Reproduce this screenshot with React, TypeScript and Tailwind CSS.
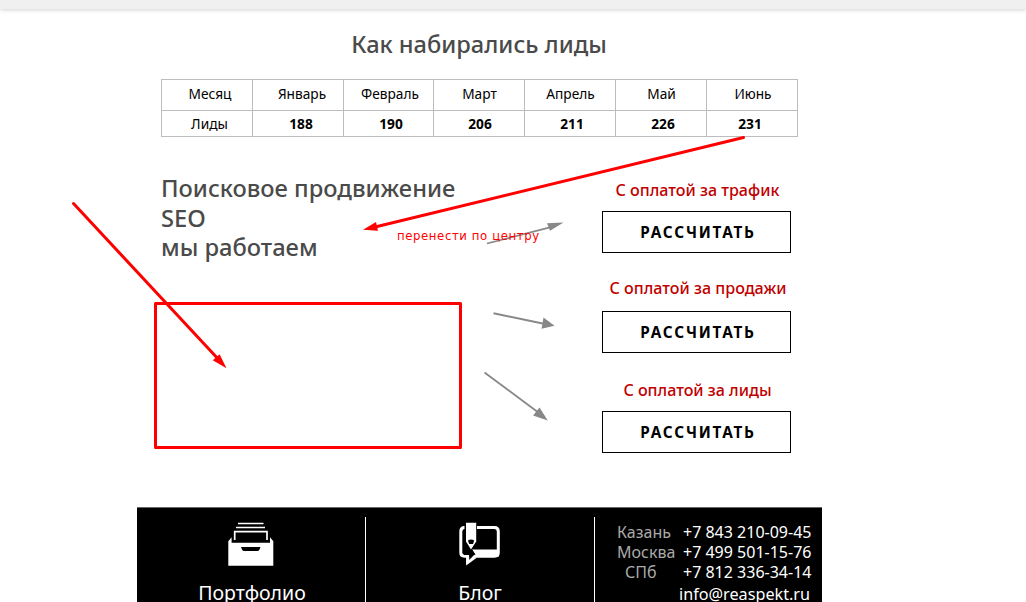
const months = [
  { name: 'Месяц', value: 'Лиды', top: 'pl-[6px]', bottom: 'pl-[5px]' },
  { name: 'Январь', value: '188', top: 'pl-[8px]', bottom: 'pl-[6px]' },
  { name: 'Февраль', value: '190', top: 'pl-[3px]', bottom: 'pl-[5px]' },
  { name: 'Март', value: '206', top: 'pl-px', bottom: 'pl-[2px]' },
  { name: 'Апрель', value: '211', top: 'pl-px', bottom: 'pl-[4px]' },
  { name: 'Май', value: '226', top: 'pl-px', bottom: 'pl-[4px]' },
  { name: 'Июнь', value: '231', top: 'pl-[2px]', bottom: 'pr-[4px]' },
];

const offers = [
  { label: 'С оплатой за трафик', look: 'h-[32px] pl-[2px]' },
  { label: 'С оплатой за продажи', look: 'h-[34px] pl-[3px]' },
  { label: 'С оплатой за лиды', look: 'h-[32px] pl-[2px]' },
];

const phones = [
  { city: 'Казань', phone: '+7 843 210-09-45', pad: '' },
  { city: 'Москва', phone: '+7 499 501-15-76', pad: '' },
  { city: 'СПб', phone: '+7 812 336-34-14', pad: 'pl-[8px]' },
];

function LeadsTable() {
  return (
    <div className="grid h-[58px] w-[637px] grid-cols-[91px_91px_90px_91px_91px_91px_91px] border-t border-l border-[#bdbdbd] text-[13.7px] text-black">
      {months.map((m, i) => (
        <div key={m.name} className="grid grid-rows-[31px_26px] border-r border-[#bdbdbd]">
          <div className={`border-b border-[#bdbdbd] text-center leading-[27px] ${m.top}`}>{m.name}</div>
          <div className={`border-b border-[#bdbdbd] text-center leading-[26px] ${m.bottom} ${i ? 'font-bold' : ''}`}>
            {m.value}
          </div>
        </div>
      ))}
    </div>
  );
}

function DrawerIcon() {
  return (
    <svg className="block h-[48px] w-[50px] shrink-0" viewBox="0 0 50 48" fill="none">
      <path d="M12 3.5H37.500M10 7.500H39" stroke="#fff" strokeWidth="1.500" />
      <path d="M8.700 20V11.600H41V20" stroke="#fff" strokeWidth="1.700" />
      <path d="M2.300 45.700V21.300L5.600 17.300V22.700H44V17.300L47.300 21.300V45.700Z" fill="#fff" />
      <path d="M15 27H34.500L33.500 29.500Q33 31 31 31H18.500Q16.500 31 16 29.500Z" fill="#000" />
    </svg>
  );
}

function BlogIcon() {
  return (
    <svg className="block h-[48px] w-[50px] shrink-0" viewBox="0 0 50 48" fill="none">
      <path
        d="M10.500 7.500H9.500Q5.800 7.500 5.800 11.500V32.500Q5.800 36.200 9.500 36.200H12.700V41L17.700 36.200H39.500Q43.300 36.200 43.300 32.500V11.500Q43.300 7.500 39.500 7.500H20.500"
        stroke="#fff"
        strokeWidth="3"
      />
      <path d="M11.200 36V45.500L22 37.500Z" fill="#fff" />
      <path d="M17 29.600H43.500V37H22Z" fill="#fff" />
      <path d="M9 24L15 29.500H17L20 34L14.200 40V35H9Z" fill="#000" />
      <path d="M9.500 3V21.500L14.500 28.500L16 29H18L22 21.500V3Z" fill="#000" />
      <path d="M11 2.700H21.200V21.500L16 29.500L11 21.500Z" fill="#fff" />
      <path d="M13 20.500Q16 18.500 19.200 20.500L18 24H14.200Z" fill="#000" />
    </svg>
  );
}

function Annotations() {
  return (
    <svg className="pointer-events-none absolute top-0 left-0 h-[602px] w-[1026px]" viewBox="0 0 1026 602" fill="none">
      <g stroke="#888" fill="#888">
        <path d="M487 243.500L550 227.300" strokeWidth="1.800" />
        <path d="M563.500 222.500L547 223.200L550 230.700Z" stroke="none" />
        <path d="M493.500 313.300L545 324" strokeWidth="2" />
        <path d="M554.500 325.800L543.500 317.500L541.500 328.700Z" stroke="none" />
        <path d="M484.500 372.500L540 413.800" strokeWidth="1.800" />
        <path d="M547.800 420.500L539.500 407.500L533 415.500Z" stroke="none" />
      </g>
      <g stroke="#f00" fill="#f00">
        <path d="M743.500 137.500L374 227.300" strokeWidth="3" strokeLinecap="round" />
        <path d="M363 229.700L376 222L378 230.700Z" stroke="none" />
        <path d="M73.500 203.500L220 361" strokeWidth="3" strokeLinecap="round" />
        <path d="M226.500 368.300L212.800 360.300L219.600 354.200Z" stroke="none" />
        <rect x="155.500" y="303.500" width="305" height="144" strokeWidth="3" strokeLinejoin="round" fill="none" />
      </g>
    </svg>
  );
}

export default function App() {
  return (
    <div className="relative flex h-[602px] w-[1026px] flex-col overflow-hidden bg-white font-['Noto_Sans',sans-serif]">
      <div className="h-[9px] shrink-0 bg-[#f0f0f0] shadow-[0_1px_4px_rgba(0,0,0,0.18)]" />
      <main className="ml-[161px] flex h-[498px] w-[637px] shrink-0 flex-col">
        <h2 className="mt-[19px] mb-[19px] pr-[1px] text-center text-[23.6px] leading-8 font-medium text-[#4a4a4a]">
          Как набирались лиды
        </h2>
        <LeadsTable />
        <div className="mt-[37px] flex">
          <h2 className="w-[441px] text-[23.7px] leading-[29px] font-medium text-[#4a4a4a]">
            Поисковое продвижение
            <div className="pt-px">SEO</div>
            <div>мы работаем</div>
          </h2>
          <div className="w-[189px]">
            {offers.map((o, i) => (
              <div key={o.label} className={`flex flex-col ${i === 0 ? 'pt-[5px]' : i === 1 ? 'pt-[24px]' : 'pt-[26px]'}`}>
                <div className={`text-center text-[16.1px] leading-[23px] font-medium whitespace-nowrap text-[#c00000] ${o.look}`}>
                  {o.label}
                </div>
                <button className="h-[42px] border border-black pl-[3px] text-[15.3px] leading-[40px] font-bold tracking-[1.800px] text-black">
                  РАССЧИТАТЬ
                </button>
              </div>
            ))}
          </div>
        </div>
      </main>
      <footer className="ml-[137px] flex h-[95px] w-[685px] shrink-0 border-t border-[#666] bg-black pt-[9px] text-white">
        <div className="flex w-[229px] shrink-0 flex-col items-center border-r border-white pt-[3px]">
          <DrawerIcon />
          <div className="pt-[12px] pl-[2px] text-[19.5px] leading-[26px]">Портфолио</div>
        </div>
        <div className="flex w-[229px] shrink-0 flex-col items-center border-r border-white pt-[3px]">
          <BlogIcon />
          <div className="pt-[12px] text-[19.5px] leading-[26px]">Блог</div>
        </div>
        <div className="grow pt-[5px] pl-[22px] text-[16px] leading-[20px]">
          {phones.map((p) => (
            <div key={p.city} className="flex whitespace-nowrap">
              <div className={`w-[66px] text-[#aaa] ${p.pad}`}>{p.city}</div>
              <div>{p.phone}</div>
            </div>
          ))}
          <div className="pt-[2px] pl-[62px] text-[16.2px]">info@reaspekt.ru</div>
        </div>
      </footer>
      <Annotations />
      <div className="absolute top-[228px] left-[397px] font-['DejaVu_Sans_Condensed','DejaVu_Sans',sans-serif] text-[13px] leading-[16px] tracking-[0.600px] whitespace-nowrap text-[#f00]">
        перенести по центру
      </div>
    </div>
  );
}
